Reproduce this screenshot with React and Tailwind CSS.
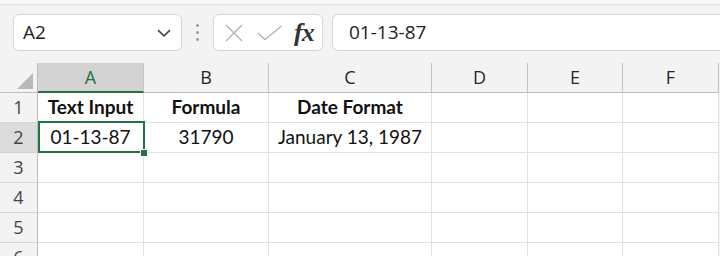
import React from 'react';

// column widths measured from the sheet, header column first
const COLS = ['A', 'B', 'C', 'D', 'E', 'F'];
const ROWS = [1, 2, 3, 4, 5, 6];

const cellData = {
  '1A': { text: 'Text Input', bold: true },
  '1B': { text: 'Formula', bold: true },
  '1C': { text: 'Date Format', bold: true },
  '2A': { text: '01-13-87' },
  '2B': { text: '31790' },
  '2C': { text: 'January 13, 1987' },
};

const uiFont = { fontFamily: '"Open Sans", "Noto Sans", sans-serif' };
const cellFont = { fontFamily: 'Lato, "Liberation Sans", sans-serif' };

const Toolbar = () => (
  <div className="bg-[#f3f3f3]">
    <div className="h-[5px] bg-[#f7f7f7] border-b border-[#dedede]" />
    <div className="flex items-center pl-[13px] pt-[9px] pb-[12px]" style={uiFont}>
      {/* name box */}
      <div className="w-[169px] h-[37px] bg-white border border-[#d6d6d6] rounded-[6px] flex items-center justify-between pl-[9px] pr-[10px]">
        <span className="text-[19px] text-[#222]">A2</span>
        <svg width="14" height="8" viewBox="0 0 14 8" fill="none">
          <path d="M1 1.2 L7 6.8 L13 1.2" stroke="#444" strokeWidth="1.6" />
        </svg>
      </div>
      {/* grip dots */}
      <div className="w-[31px] flex flex-col items-center gap-[4px]">
        <span className="w-[3px] h-[3px] rounded-full bg-[#9a9a9a]" />
        <span className="w-[3px] h-[3px] rounded-full bg-[#9a9a9a]" />
        <span className="w-[3px] h-[3px] rounded-full bg-[#9a9a9a]" />
      </div>
      {/* cancel / enter / fx */}
      <div className="w-[110px] h-[37px] bg-white border border-[#d6d6d6] rounded-[6px] flex items-center pl-[10px]">
        <svg width="20" height="20" viewBox="0 0 20 20" fill="none">
          <path d="M2 2 L18 18 M18 2 L2 18" stroke="#b3b3b3" strokeWidth="1.4" />
        </svg>
        <svg width="26" height="16" viewBox="0 0 26 16" fill="none" className="ml-[13px]">
          <path d="M1 8 L8 14.5 L24.5 1" stroke="#b3b3b3" strokeWidth="1.4" />
        </svg>
        <span
          className="ml-[11px] text-[26px] italic font-bold text-[#333] leading-none tracking-[-1px]"
          style={{ fontFamily: '"Liberation Serif", "DejaVu Serif", serif' }}
        >
          fx
        </span>
      </div>
      {/* formula input */}
      <div className="flex-1 ml-[9px] h-[37px] bg-white border border-r-0 border-[#d6d6d6] rounded-l-[6px] flex items-center pl-[16px]">
        <span className="text-[19px] text-[#222]">01-13-87</span>
      </div>
    </div>
  </div>
);

const Grid = () => (
  <div
    className="grid"
    style={{ gridTemplateColumns: '38px 106px 125px 163px 96px 95px 96px', gridAutoRows: '30px' }}
  >
    {/* corner */}
    <div className="bg-[#f3f3f3] border-r border-b border-[#bdbdbd] flex items-end justify-end pr-[4px] pb-[3px]">
      <svg width="16" height="16" viewBox="0 0 16 16">
        <path d="M16 0 L16 16 L0 16 Z" fill="#b9b9b9" />
      </svg>
    </div>
    {COLS.map((c) =>
      c === 'A' ? (
        <div
          key={c}
          className="bg-[#d3d3d3] border-r border-[#c4c4c4] border-b-2 border-b-[#217346] flex items-center justify-center text-[18px] text-[#217346]"
          style={uiFont}
        >
          {c}
        </div>
      ) : (
        <div
          key={c}
          className="bg-[#f3f3f3] border-r border-b border-[#c4c4c4] border-b-[#bdbdbd] flex items-center justify-center text-[18px] text-[#262626]"
          style={uiFont}
        >
          {c}
        </div>
      )
    )}
    {ROWS.map((r) => (
      <React.Fragment key={r}>
        <div
          className={`${r === 2 ? 'bg-[#dcdcdc]' : 'bg-[#f3f3f3]'} border-r border-r-[#bdbdbd] border-b border-b-[#d4d4d4] flex items-center justify-center text-[18px] text-[#444]`}
          style={uiFont}
        >
          {r}
        </div>
        {COLS.map((c) => {
          const d = cellData[`${r}${c}`];
          const selected = r === 2 && c === 'A';
          return (
            <div
              key={c}
              className="relative bg-white border-r border-b border-[#e1e1e1] flex items-center justify-center text-[19px] text-[#111]"
              style={cellFont}
            >
              {d && <span className={d.bold ? 'font-bold' : ''}>{d.text}</span>}
              {selected && (
                <>
                  <div className="absolute z-10 left-[0px] top-[-2px] right-[-2px] bottom-[-1px] border-2 border-[#217346]" />
                  <div className="absolute z-20 right-[-5px] bottom-[-5px] w-[8px] h-[8px] bg-[#217346] border border-white" />
                </>
              )}
            </div>
          );
        })}
      </React.Fragment>
    ))}
  </div>
);

export default function App() {
  return (
    <div className="w-[720px] h-[263px] bg-white overflow-hidden">
      <div className="h-[256px] overflow-hidden bg-[#f3f3f3]">
        <Toolbar />
        <Grid />
      </div>
    </div>
  );
}
